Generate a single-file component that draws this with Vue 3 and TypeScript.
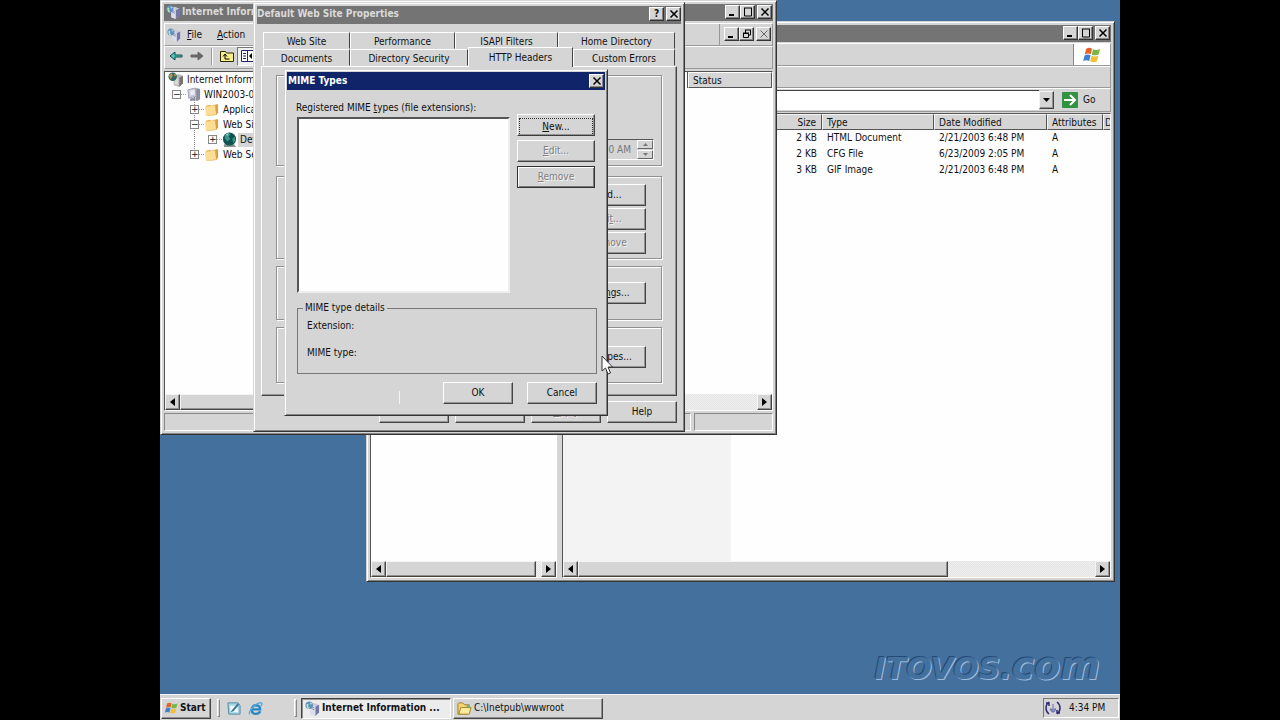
<script setup lang="ts">
interface TreeNode { label: string; level: number; sign: string; icon: string; selected?: boolean }
interface FileRow { size: string; type: string; modified: string; attributes: string }

const tree: TreeNode[] = [
  { label: 'Internet Information Services', level: 0, sign: '', icon: 'services' },
  { label: 'WIN2003-01 (local computer)', level: 1, sign: '−', icon: 'computer' },
  { label: 'Application Pools', level: 2, sign: '+', icon: 'folder' },
  { label: 'Web Sites', level: 2, sign: '−', icon: 'folder' },
  { label: 'Default Web Site', level: 3, sign: '+', icon: 'globe', selected: true },
  { label: 'Web Service Extensions', level: 2, sign: '+', icon: 'folder' },
]

const files: FileRow[] = [
  { size: '2 KB', type: 'HTML Document', modified: '2/21/2003 6:48 PM', attributes: 'A' },
  { size: '2 KB', type: 'CFG File', modified: '6/23/2009 2:05 PM', attributes: 'A' },
  { size: '3 KB', type: 'GIF Image', modified: '2/21/2003 6:48 PM', attributes: 'A' },
]
</script>

<template>
  <svg class="defs" aria-hidden="true">
    <symbol id="i-services" viewBox="0 0 16 16">
      <path d="M6 3l4-1 5 2v8l-4 4-5-2z" fill="#c9cbdc" />
      <path d="M11 6l4-2v8l-4 4z" fill="#7478a8" />
      <path d="M6 3l5 3v10l-5-2z" fill="#dcdeec" />
      <path d="M7 6l3 1.500M7 8l3 1.500" stroke="#8488b0" />
      <circle cx="4.500" cy="4.500" r="4" fill="#5f93bd" />
      <path d="M1.500 4c1-2 3-1 2 1s2 1 1 3-3-1-3-4zM5 1l3 2-2 1z" fill="#bfe0c4" />
    </symbol>
    <symbol id="i-tree" viewBox="0 0 16 16">
      <path d="M6 5l5-3 5 2v8l-4 4-6-2z" fill="#b9b9b4" />
      <path d="M12 6l4-2v8l-4 4z" fill="#77777b" />
      <path d="M7 6l4 1v7l-4-1z" fill="#dad9d1" />
      <circle cx="5" cy="5" r="4.500" fill="#2f6768" />
      <path d="M1 4l3-3 1 3-2 4zM6 2l3 1-2 2z" fill="#c1964b" />
    </symbol>
    <symbol id="i-computer" viewBox="0 0 16 16">
      <path d="M11 1l4 1v11l-3 2-2-1z" fill="#8d8da2" />
      <path d="M2 3l8-2 1 9-8 2z" fill="#c8c9d8" stroke="#a0a1b4" />
      <path d="M4 4l5-1 .6 5-5 1z" fill="#e8e9f2" />
      <path d="M5 12h4l1 2-6 1z" fill="#8486a0" />
    </symbol>
    <symbol id="i-folder" viewBox="0 0 16 16">
      <path d="M2 4l4-1 2 1 6-2 1 9-3 3-9 1z" fill="#e6b45a" />
      <path d="M1 5l11-1 1 9-11 2z" fill="#fbdd93" />
      <path d="M12 4l3-2v9l-2 3z" fill="#dca044" />
    </symbol>
    <symbol id="i-globe" viewBox="0 0 16 16">
      <path d="M2 13h11l2 3H2z" fill="#86968c" />
      <circle cx="8" cy="7.500" r="7" fill="#0e5352" />
      <path d="M3 4c2-3 5-3 6-2L7 5l2 2-3 3-3-3zM11 7l3-2v4l-2 3z" fill="#3b978b" />
      <path d="M4 3l3-2-1 3z" fill="#a5ddd3" />
    </symbol>
    <symbol id="i-flag" viewBox="0 0 20 18">
      <path d="M4 3c2.500-1.700 4.500-1.300 6-.3L8.800 8.200c-2-1-3.700-.8-6 .4z" fill="#e5622b" />
      <path d="M11 3.200c2.500 1.200 4.500 1 7-.2l-1.400 5.600c-2.300 1-4.500 1-6.800-.1z" fill="#78b743" />
      <path d="M2.600 9.500c2.200-1.300 4-1.300 6-.2l-1.400 5.600c-2-1-3.900-1-6 .2z" fill="#3d7fd6" />
      <path d="M9.600 9.800c2.400 1 4.400 1 6.800 0L15 15.300c-2.500 1.200-4.600 1.100-6.900 0z" fill="#f3c035" />
    </symbol>
    <symbol id="i-open" viewBox="0 0 16 16">
      <path d="M1 3l1-1h4l2 2h5v3l-2 7H1z" fill="#f5d56f" stroke="#9b7a20" />
      <path d="M4 7h11l-2 7H2z" fill="#ffeb9e" stroke="#a17e24" />
      <path d="M11 3l3 2-1 3-3-2z" fill="#7cae7a" />
    </symbol>
  </svg>

  <div class="screen">
    <main class="desktop">
      <p class="brand">ITOVOS.<span>com</span></p>

      <section class="window explorer" aria-label="C:\Inetpub\wwwroot">
        <header class="titlebar inactive">
          <span class="title"></span>
          <button class="cap" aria-label="Minimize"><svg viewBox="0 0 12 10"><path d="M2 8h5" stroke="#000" stroke-width="2" /></svg></button>
          <button class="cap" aria-label="Maximize"><svg viewBox="0 0 12 10"><path d="M2 1h8M2.500 1v8h7V1" fill="none" stroke="#000" /></svg></button>
          <button class="cap gap" aria-label="Close"><svg viewBox="0 0 12 10"><path d="M2.500 1.500l7 7m0-7l-7 7" stroke="#000" stroke-width="1.500" /></svg></button>
        </header>
        <div class="bar menu-bar"><span class="flag"><svg><use href="#i-flag" /></svg></span></div>
        <div class="bar tool-row"></div>
        <div class="bar address">
          <input class="address-text" type="text" aria-label="Address" />
          <button class="drop" aria-label="Show addresses"><svg viewBox="0 0 9 5"><path d="M1 0h7L4.500 4z" /></svg></button>
          <button class="go"><svg viewBox="0 0 16 16"><rect width="16" height="16" rx="1" fill="#2f9340" /><path d="M2 8h10M8 3l5 5-5 5" fill="none" stroke="#fff" stroke-width="2" /></svg>Go</button>
        </div>
        <div class="panes">
          <div class="pane left-pane">
            <div class="space"></div>
            <div class="scrollbar">
              <button class="arrow" aria-label="Scroll left"><svg viewBox="0 0 5 8"><path d="M5 0v8L0 4z" /></svg></button>
              <i class="thumb grow"></i><i class="track-end"></i>
              <button class="arrow" aria-label="Scroll right"><svg viewBox="0 0 5 8"><path d="M0 0v8l5-4z" /></svg></button>
            </div>
          </div>
          <div class="pane file-pane">
            <div class="space sorted">
              <table>
                <colgroup><col class="c-name" /><col class="c-size" /><col class="c-type" /><col class="c-date" /><col class="c-attr" /><col /></colgroup>
                <thead><tr><th></th><th class="num">Size</th><th>Type</th><th>Date Modified</th><th>Attributes</th><th>D</th></tr></thead>
                <tbody>
                  <tr v-for="f in files" :key="f.type">
                    <td></td><td class="num">{{ f.size }}</td><td>{{ f.type }}</td><td>{{ f.modified }}</td><td>{{ f.attributes }}</td><td></td>
                  </tr>
                </tbody>
              </table>
            </div>
            <div class="scrollbar">
              <button class="arrow" aria-label="Scroll left"><svg viewBox="0 0 5 8"><path d="M5 0v8L0 4z" /></svg></button>
              <i class="thumb long"></i><i class="grow"></i>
              <button class="arrow" aria-label="Scroll right"><svg viewBox="0 0 5 8"><path d="M0 0v8l5-4z" /></svg></button>
            </div>
          </div>
        </div>
      </section>

      <section class="window iis" aria-label="Internet Information Services">
        <header class="titlebar inactive">
          <svg class="app-icon"><use href="#i-services" /></svg>
          <span class="title">Internet Information Services</span>
          <button class="cap" aria-label="Minimize"><svg viewBox="0 0 12 10"><path d="M2 8h5" stroke="#000" stroke-width="2" /></svg></button>
          <button class="cap" aria-label="Maximize"><svg viewBox="0 0 12 10"><path d="M2 1h8M2.500 1v8h7V1" fill="none" stroke="#000" /></svg></button>
          <button class="cap gap" aria-label="Close"><svg viewBox="0 0 12 10"><path d="M2.500 1.500l7 7m0-7l-7 7" stroke="#000" stroke-width="1.500" /></svg></button>
        </header>
        <nav class="bar menus">
          <svg class="app-icon"><use href="#i-services" /></svg>
          <button class="menu"><u>F</u>ile</button>
          <button class="menu"><u>A</u>ction</button>
          <span class="mdi">
            <button class="cap" aria-label="Minimize child"><svg viewBox="0 0 12 10"><path d="M2 8h5" stroke="#000" stroke-width="2" /></svg></button>
            <button class="cap" aria-label="Restore child"><svg viewBox="0 0 12 10"><path d="M4 1h6M4.500 1v3M9.500 1v5h-2M2 4.500h5.500v4h-5v-4M2 4h6" fill="none" stroke="#000" /></svg></button>
            <button class="cap gap" aria-label="Close child"><svg viewBox="0 0 12 10"><path d="M2.500 1.500l7 7m0-7l-7 7" stroke="#666" /></svg></button>
          </span>
        </nav>
        <div class="bar tools">
          <button class="tool" aria-label="Back"><svg viewBox="0 0 14 12"><path d="M1 6l5-4v3h7v2H6v3z" fill="#4fc4b4" stroke="#174c48" /></svg></button>
          <button class="tool" aria-label="Forward"><svg viewBox="0 0 14 12"><path d="M13 6L8 2v3H1v2h7v3z" fill="#666" stroke="#666" /></svg></button>
          <i class="rule"></i>
          <button class="tool up" aria-label="Up one level"><svg viewBox="0 0 14 12"><path d="M.5 11.500v-10h5l1 1.500h7v8.500z" fill="#f7f08a" stroke="#2b2900" /><path d="M9.500 9H5V5M3 6.500L5 4l2 2.500" fill="none" stroke="#000" /></svg></button>
          <button class="tool pressed" aria-label="Show or hide tree"><svg viewBox="0 0 14 12"><path d="M.5.5h13v11H.5zM6.500 1v10" fill="#fff" stroke="#24246c" /><path d="M2 3.500h3M2 6h3M2 8.500h3" stroke="#24246c" /><path d="M11 3v6L8 6z" /></svg></button>
        </div>
        <div class="console pane">
          <div class="console-body">
            <ul class="tree">
              <li v-for="n in tree" :key="n.label" :class="['level-' + n.level, { selected: n.selected }]">
                <span v-if="n.sign" class="sign">{{ n.sign }}</span>
                <svg class="node"><use :href="'#i-' + (n.icon === 'services' ? 'tree' : n.icon)" /></svg>
                <span class="node-label">{{ n.label }}</span>
              </li>
            </ul>
            <div class="status-head">Status</div>
          </div>
          <div class="scrollbar">
            <button class="arrow" aria-label="Scroll left"><svg viewBox="0 0 5 8"><path d="M5 0v8L0 4z" /></svg></button>
            <i class="thumb mid"></i><i class="grow"></i>
            <button class="arrow" aria-label="Scroll right"><svg viewBox="0 0 5 8"><path d="M0 0v8l5-4z" /></svg></button>
          </div>
        </div>
        <footer class="statusbar"><span class="cell grow"></span><span class="cell last"></span></footer>
      </section>

      <section class="window props" role="dialog" aria-label="Default Web Site Properties">
        <header class="titlebar inactive">
          <span class="title">Default Web Site Properties</span>
          <button class="cap" aria-label="Help">?</button>
          <button class="cap gap" aria-label="Close"><svg viewBox="0 0 12 10"><path d="M2.500 1.500l7 7m0-7l-7 7" stroke="#000" stroke-width="1.500" /></svg></button>
        </header>
        <div class="tabs">
          <div class="tab-row">
            <button class="tab w86">Web Site</button><button class="tab w105">Performance</button><button class="tab w103">ISAPI Filters</button><button class="tab grow">Home Directory</button>
          </div>
          <div class="tab-row">
            <button class="tab w86">Documents</button><button class="tab w118">Directory Security</button><button class="tab w105 active">HTTP Headers</button><button class="tab grow">Custom Errors</button>
          </div>
        </div>
        <div class="page">
          <div class="group g1">
            <div class="spinner">
              <input type="text" value="12:00:00 AM" disabled aria-label="Expiration time" />
              <span><button disabled aria-label="Later"><svg viewBox="0 0 5 3"><path d="M0 3h5L2.500 0z" /></svg></button><button disabled aria-label="Earlier"><svg viewBox="0 0 5 3"><path d="M0 0h5L2.500 3z" /></svg></button></span>
            </div>
          </div>
          <div class="group g2"><button class="btn">A<u>d</u>d...</button><button class="btn" disabled>Edi<u>t</u>...</button><button class="btn" disabled>Remove</button></div>
          <div class="group g3"><button class="btn">Rati<u>n</u>gs...</button></div>
          <div class="group g4"><button class="btn wide">MIME Types...</button></div>
        </div>
        <div class="actions"><button class="btn">OK</button><button class="btn">Cancel</button><button class="btn" disabled><u>A</u>pply</button><button class="btn">Help</button></div>
      </section>

      <section class="window mime" role="dialog" aria-label="MIME Types">
        <header class="titlebar">
          <span class="title">MIME Types</span>
          <button class="cap" aria-label="Close"><svg viewBox="0 0 12 10"><path d="M2.500 1.500l7 7m0-7l-7 7" stroke="#000" stroke-width="1.500" /></svg></button>
        </header>
        <div class="mime-body">
          <label for="types">Registered MIME <u>t</u>ypes (file extensions):</label>
          <div class="mime-main">
            <select id="types" size="10"></select>
            <div class="side"><button class="btn focus"><u>N</u>ew...</button><button class="btn" disabled><u>E</u>dit...</button><button class="btn default" disabled><u>R</u>emove</button></div>
          </div>
          <fieldset><legend>MIME type details</legend><p>Extension:</p><p>MIME type:</p></fieldset>
          <div class="confirm"><i class="tick"></i><button class="btn">OK</button><button class="btn">Cancel</button></div>
        </div>
      </section>

      <svg class="pointer" viewBox="0 0 12 20" aria-hidden="true"><path d="M1 1v15l3.500-3 2.500 6 2.500-1L7 12h4.500z" fill="#fff" stroke="#333" /></svg>

      <footer class="taskbar">
        <button class="start"><svg><use href="#i-flag" /></svg>Start</button>
        <i class="grip"></i>
        <button class="quick" aria-label="Show Desktop"><svg viewBox="0 0 16 16"><path d="M2 2h11l2 3v9H3z" fill="#a9d3e2" stroke="#4b8ba4" /><path d="M4 5h8l1 7H5z" fill="#eef8fb" /><path d="M6 10l6-7 2 1-6 7-3 1z" fill="#3c7894" /></svg></button>
        <button class="quick" aria-label="Internet Explorer"><svg viewBox="0 0 16 16"><path d="M13 11c-2 4-9 4-9-2s9-6 9 0H5" fill="none" stroke="#2787c7" stroke-width="2.500" /><path d="M2 14C-1 12 9 1 14 2c2 1 0 3-1 4" fill="none" stroke="#5aacdc" stroke-width="1.500" /></svg></button>
        <i class="grip second"></i>
        <button class="task current"><svg><use href="#i-services" /></svg>Internet Information ...</button>
        <button class="task"><svg><use href="#i-open" /></svg>C:\Inetpub\wwwroot</button>
        <div class="tray"><svg viewBox="0 0 16 14"><path d="M4 1C0 4 0 10 4 13M1 2h3v3M12 1c4 3 4 9 0 12M15 12h-3V9" fill="none" stroke="#2b2b73" stroke-width="1.500" /><path d="M5 8h6l-2 3H7zM8 3v4" fill="#8f93c4" stroke="#6a6eae" /></svg><time>4:34 PM</time></div>
      </footer>
    </main>
  </div>
</template>

<style>
body { margin: 0; background: #000; }
</style>

<style scoped>
* { box-sizing: border-box; }
.defs { position: absolute; width: 0; height: 0; }
.screen { height: 100vh; background: #000; display: flex; justify-content: center; overflow: hidden; }
.desktop {
  --face: #d5d5d5;
  position: relative; width: 75%; height: 100%; overflow: hidden; background: #44709e;
  display: flex; flex-direction: column; justify-content: flex-end;
  font: 10px/14px "DejaVu Sans Condensed", "DejaVu Sans", sans-serif; color: #111; white-space: nowrap;
}
button, input, select { font: inherit; color: inherit; margin: 0; padding: 0; border-radius: 0; outline: 0; }
button { border: 0; background: none; white-space: nowrap; }
svg { display: block; flex: none; }
i { display: block; }
u { text-underline-offset: 1px; }
.grow { flex: 1; }
.window {
  position: absolute; background: var(--face); padding: 3px; display: flex; flex-direction: column;
  border: 1px solid; border-color: #d5d5d5 #333 #333 #d5d5d5;
  box-shadow: inset 1px 1px #fff, inset -1px -1px #858585;
}
.titlebar { height: 17px; flex: none; display: flex; align-items: center; padding: 0 1px 1px 0; background: #10246a; color: #fff; font-weight: bold; }
.inactive { background: #747474; color: #dadada; }
.title { flex: 1; overflow: hidden; padding-left: 2px; }
.app-icon { width: 14px; height: 14px; margin-left: 2px; }
.cap {
  width: 15px; height: 14px; background: var(--face); color: #111; font-weight: bold; line-height: 12px; text-align: center;
  border: 1px solid; border-color: #fff #333 #333 #fff; box-shadow: inset -1px -1px #858585; display: grid; place-items: center;
}
.cap svg { width: 12px; height: 10px; }
.gap { margin-left: 2px; }
.bar { flex: none; display: flex; align-items: center; border: 1px solid; border-color: #fff #999 #999 #fff; }
.pane { background: #fefefe; border: 1px solid; border-color: #555 #fff #fff #555; display: flex; flex-direction: column; min-width: 0; }
.space { flex: 1; }
.scrollbar { height: 16px; flex: none; display: flex; background: repeating-conic-gradient(#e2e2e2 0 25%, #f1f1f1 0 50%) 0 0 / 2px 2px; }
.arrow { width: 15px; display: grid; place-items: center; }
.arrow svg { width: 5px; height: 8px; }
.arrow, .thumb, .drop { background: var(--face); border: 1px solid; border-color: #f4f4f4 #444 #444 #f4f4f4; box-shadow: inset -1px -1px #929292; }
.track-end { width: 5px; }
.btn {
  width: 70px; height: 22px; flex: none; background: var(--face); border: 1px solid; border-color: #fff #444 #444 #fff;
  box-shadow: inset -1px -1px #949494; text-align: center;
}
.btn:disabled { color: #808080; text-shadow: 1px 1px #f4f4f4; }

.explorer { left: 206px; top: 21px; width: 749px; height: 561px; }
.menu-bar { height: 23px; margin-top: 1px; justify-content: flex-end; }
.flag { width: 37px; height: 21px; background: #fff; border-left: 1px solid #888; display: grid; place-items: center; }
.flag svg { width: 20px; height: 18px; }
.tool-row { height: 22px; }
.address { height: 24px; }
.address-text { flex: 1; height: 20px; min-width: 0; border: 1px solid; border-color: #444 #fff #fff #444; border-right: 0; background: #fff; }
.drop { width: 15px; height: 18px; display: grid; place-items: center; }
.drop svg { width: 9px; height: 5px; }
.go { width: 56px; padding-left: 8px; display: flex; align-items: center; gap: 5px; }
.go svg { width: 16px; height: 16px; }
.panes { flex: 1; display: flex; gap: 5px; margin-top: 1px; min-height: 0; }
.left-pane { width: 187px; }
.file-pane { flex: 1; }
.sorted { background: linear-gradient(90deg, #f3f3f3 168px, #fefefe 168px); overflow: hidden; }
.long { width: 370px; }
table { border-collapse: separate; border-spacing: 0; table-layout: fixed; width: 100%; }
.c-name { width: 168px; }
.c-size { width: 91px; }
.c-type { width: 112px; }
.c-date { width: 113px; }
.c-attr { width: 56px; }
th { height: 16px; font-weight: normal; text-align: left; background: var(--face); border: 1px solid; border-color: #f4f4f4 #555 #555 #f4f4f4; padding: 0 0 0 4px; line-height: 13px; overflow: hidden; }
th:last-child { padding-left: 1px; border-right: 0; }
td { height: 16px; padding: 0 0 0 5px; line-height: 16px; }
th.num, td.num { text-align: right; padding-right: 5px; }

.iis { left: 0; top: 0; width: 617px; height: 435px; }
.menus { height: 23px; margin-top: 2px; }
.menu { padding: 0 0 0 6px; margin-right: 9px; }
.mdi { margin-left: auto; height: 21px; padding: 0 1px 2px 4px; border-left: 1px solid #999; display: flex; align-items: center; }
.tools { height: 23px; padding: 0 0 3px 4px; }
.tool { width: 14px; height: 12px; margin-right: 7px; }
.tool svg { width: 14px; height: 12px; }
.rule { width: 2px; height: 17px; border-left: 1px solid #999; border-right: 1px solid #fff; margin-right: 7px; }
.up { margin-right: 3px; }
.pressed { width: 22px; height: 19px; padding-left: 3px; border: 1px solid; border-color: #777 #fff #fff #777; background: #eee; }
.console { flex: 1; margin-top: 2px; }
.console-body { flex: 1; display: flex; min-height: 0; }
.tree { width: 523px; margin: 0; padding: 0; list-style: none; overflow: hidden; }
.tree li { height: 15px; display: flex; align-items: center; position: relative; }
.level-0 { padding-left: 3px; }
.level-1 { padding-left: 7px; }
.level-2 { padding-left: 25px; }
.level-3 { padding-left: 43px; }
.sign { width: 9px; height: 9px; flex: none; border: 1px solid #888; font: 9px/7px "DejaVu Sans", sans-serif; text-align: center; background: #fff; position: relative; z-index: 1; }
.sign + .node { margin-left: 5px; }
.node { width: 15px; height: 15px; }
.node-label { padding: 0 2px; margin-left: 2px; }
.level-1 .node-label, .level-3 .node-label { margin-left: 1px; }
.level-2 .node-label { margin-left: 2px; }
.selected .node-label { background: #d5d5d5; }
.level-2::before { content: ""; position: absolute; left: 29px; top: -5px; height: 10px; border-left: 1px dotted #888; }
.level-2:last-child::before { top: -20px; height: 26px; }
.sign::after { content: ""; position: absolute; left: 8px; top: 3px; width: 5px; border-top: 1px dotted #999; }
.status-head { flex: 1; height: 16px; background: var(--face); border: 1px solid; border-color: #fff #555 #555 #fff; padding-left: 4px; box-shadow: -1px 0 #555; line-height: 15px; }
.mid { width: 180px; }
.statusbar { height: 18px; margin-top: 2px; flex: none; display: flex; gap: 3px; }
.cell { border: 1px solid; border-color: #888 #fff #fff #888; }
.last { width: 79px; }

.props { left: 93px; top: 2px; width: 432px; height: 430px; }
.props .titlebar { height: 18px; padding: 0 0 2px; }
.props .title { padding-left: 0; }
.tabs { margin: 8px 6px 0; }
.tab-row { display: flex; height: 17px; align-items: flex-end; }
.tab { height: 17px; border: 1px solid; border-color: #fff #444 transparent #fff; line-height: 17px; }
.w86 { width: 87px; }
.w103 { width: 103px; }
.w105 { width: 105px; }
.w118 { width: 118px; }
.active { height: 20px; background: var(--face); position: relative; line-height: 16px; border-bottom: 0; margin-bottom: -1px; }
.page { height: 330px; margin: 0 4px; padding: 8px 14px 0 14px; border: 1px solid; border-color: #fff #444 #444 #fff; box-shadow: inset -1px -1px #949494; }
.group { border: 1px solid #909090; box-shadow: 1px 1px #fff, inset 1px 1px #fff; display: flex; flex-direction: column; align-items: flex-end; padding-right: 15px; }
.g1 { height: 91px; padding: 63px 7px 0 0; }
.g2 { height: 83px; margin-top: 10px; padding-top: 7px; gap: 2px; }
.g3 { height: 54px; margin-top: 7px; padding-top: 15px; }
.g4 { height: 56px; margin-top: 7px; padding-top: 18px; }
.group .btn { width: 75px; }
.group .wide { width: 89px; }
.spinner { display: flex; width: 100px; height: 21px; border: 1px solid; border-color: #555 #fff #fff #555; }
.spinner input { flex: 1; min-width: 0; border: 0; background: none; text-align: right; padding-right: 6px; color: #777; }
.spinner span { display: flex; flex-direction: column; gap: 1px; }
.spinner button { width: 16px; height: 9px; border: 1px solid; border-color: #fff #666 #666 #fff; display: grid; place-items: center; }
.spinner svg { width: 5px; height: 3px; fill: #777; }
.actions { display: flex; justify-content: flex-end; gap: 6px; padding: 5px 4px 0 0; }

.mime { left: 124px; top: 69px; width: 324px; height: 347px; padding: 2px; }
.mime .titlebar { height: 18px; }
.mime .title { padding-left: 1px; }
.mime-body { padding: 11px 8px 0 9px; display: flex; flex-direction: column; }
.mime-main { display: flex; justify-content: space-between; margin-top: 2px; padding: 0 2px 0 1px; }
.mime-body label { height: 14px; }
#types { appearance: none; width: 213px; height: 176px; background: #fefefe; border: 2px solid; border-color: #555 #eee #eee #555; }
.side { display: flex; flex-direction: column; gap: 4px; margin-top: -3px; }
.side .btn { width: 78px; }
.focus::before { content: ""; display: block; height: 16px; margin: 1px; margin-bottom: -16px; border: 1px dotted #333; }
.side .default { border-color: #333; box-shadow: inset 1px 1px #fff, inset -1px -1px #777; }
fieldset { margin: 8px 0 0 1px; height: 73px; border: 1px solid #777; padding: 0 9px; min-width: 0; }
legend { padding: 0 2px; margin-left: -4px; }
fieldset p { margin: 4px 0 13px; line-height: 14px; }
.confirm { display: flex; justify-content: flex-end; gap: 14px; margin-top: 8px; }
.tick { width: 1px; height: 13px; background: #f4f4f4; margin: 9px 29px 0 0; }

.pointer { position: absolute; left: 441px; top: 355px; width: 12px; height: 20px; }
.brand { margin: 0; padding-right: 20px; margin-bottom: 3px; align-self: flex-end; font: italic bold 30px/44px "DejaVu Sans", sans-serif; color: #44709e; text-shadow: -1px -1px #234b76, 1px 1px #9dbcdc; }
.brand span { font-size: 38px; }
.taskbar { height: 26px; flex: none; background: var(--face); border-top: 1px solid #f4f4f4; padding: 1px 1px 0; display: flex; align-items: center; }
.start { width: 50px; height: 21px; display: flex; align-items: center; gap: 1px; padding-left: 2px; font-weight: bold; border: 1px solid; border-color: #fff #444 #444 #fff; box-shadow: inset -1px -1px #929292; }
.start svg { width: 15px; height: 14px; }
.grip { width: 3px; height: 18px; margin-left: 6px; border: 1px solid; border-color: #fff #888 #888 #fff; }
.quick { margin-left: 6px; width: 16px; height: 16px; }
.quick svg { width: 15px; height: 15px; }
.second { margin-left: 30px; }
.task { width: 150px; height: 21px; margin-left: 2px; padding-left: 3px; display: flex; align-items: center; gap: 2px; border: 1px solid; border-color: #fff #444 #444 #fff; box-shadow: inset -1px -1px #929292; }
.task svg { width: 15px; height: 15px; }
.current { margin-left: 4px; font-weight: bold; background: #ececec; border-color: #444 #fff #fff #444; box-shadow: inset 1px 1px #929292; }
.tray { margin-left: auto; width: 76px; height: 20px; display: flex; align-items: center; gap: 8px; padding-left: 1px; border: 1px solid; border-color: #777 #fff #fff #777; }
.tray svg { width: 16px; height: 14px; }
</style>
